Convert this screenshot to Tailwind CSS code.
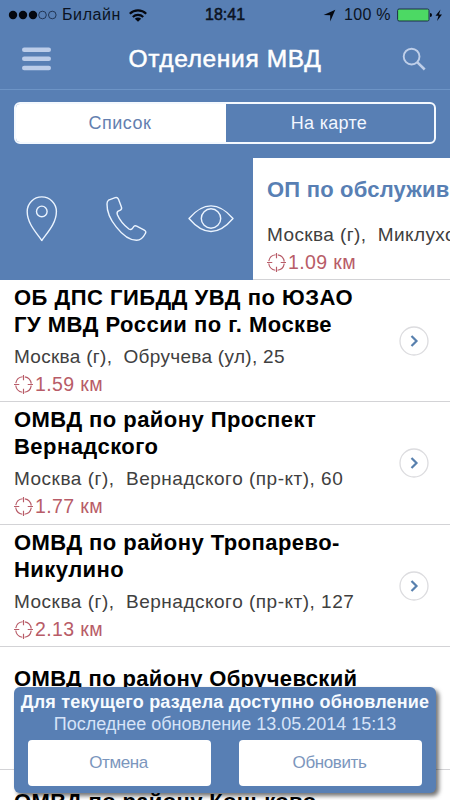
<!DOCTYPE html>
<html lang="ru">
<head>
<meta charset="utf-8">
<title>Отделения МВД</title>
<script src="https://cdn.jsdelivr.net/npm/@tailwindcss/browser@4"></script>
</head>
<body class="w-[450px] h-[800px] overflow-hidden bg-white font-['Liberation_Sans',Arial,sans-serif] relative">
<svg class="hidden">
  <symbol id="target" viewBox="0 0 18 18"><g fill="none" stroke="#b85c68" stroke-width="1.1"><circle cx="9" cy="9" r="7.4" stroke-dasharray="9.4 2.22" stroke-dashoffset="-1.11"/><path d="M9 0v5M9 13v5M0 9h5M13 9h5"/></g></symbol>
  <symbol id="go" viewBox="0 0 30 30"><circle cx="15" cy="15" r="14" fill="#fff" stroke="#dcdcdf" stroke-width="1.3"/><path d="M12.5 10l5 5-5 5" fill="none" stroke="#5880ae" stroke-width="2.2"/></symbol>
</svg>

<header class="h-[90px] bg-[#587fb4] border-b border-[#6d94c6]">
  <div class="flex h-[30px] items-center text-[16px] text-[#0b1322] leading-[30px]">
    <svg class="ml-[8px] w-[49px] h-[10px] shrink-0" viewBox="0 0 49 10"><g fill="#05080f"><circle cx="5" cy="5" r="4.2"/><circle cx="15" cy="5" r="4.2"/><circle cx="25" cy="5" r="4.2"/></g><g fill="none" stroke="#1c2e4b" stroke-width=".9"><circle cx="34.5" cy="5" r="3.8"/><circle cx="44.3" cy="5" r="3.8"/></g></svg>
    <span class="ml-[5px] w-[67px] tracking-[0.6px] whitespace-nowrap">Билайн</span>
    <svg class="w-[18px] h-[13px] shrink-0" viewBox="0 0 18 13"><g fill="none" stroke="#05080f" stroke-width="2.1"><path d="M.8 4.8a11.6 11.6 0 0 1 16.4 0"/><path d="M3.8 8a7.4 7.4 0 0 1 10.4 0"/></g><path d="M9 12.8L5.8 9.7a4.6 4.6 0 0 1 6.4 0z" fill="#05080f"/></svg>
    <span class="ml-[58px] w-[118px] text-[16px] [-webkit-text-stroke:0.5px_#0b1322]">18:41</span>
    <svg class="w-[13px] h-[13px] shrink-0" viewBox="0 0 13 13"><path d="M12.3.8L7.2 12.4V6.2L.6 6z" fill="#05080f"/></svg>
    <span class="ml-[8px] w-[53px] whitespace-nowrap tracking-[0.3px]">100 %</span>
    <svg class="w-[47px] h-[16px] shrink-0" viewBox="0 0 47 16"><rect x=".6" y="2" width="31.4" height="12" rx="1.5" fill="#4cd964" stroke="#1c3148"/><path d="M33 6a2 2 0 0 1 0 4z" fill="#05080f"/><path d="M43.5 2.6L38.500 8.800h3l-1.500 5.200 5-6.600h-3z" fill="#05080f"/></svg>
  </div>
  <div class="flex h-[58px] items-center justify-between pl-[22px] pr-[24px]">
    <svg class="w-[30px] h-[24px]" viewBox="0 0 30 24"><g fill="#bccde9"><rect x="0" y="0.500" width="29" height="4.500" rx="2.200"/><rect x="0" y="9.500" width="29" height="4.500" rx="2.200"/><rect x="0" y="18.800" width="29" height="4.500" rx="2.200"/></g></svg>
    <h1 class="mr-[4px] text-[24.500px] text-white tracking-[0.650px] whitespace-nowrap [-webkit-text-stroke:0.5px_white]">Отделения МВД</h1>
    <svg class="w-[24px] h-[24px]" viewBox="0 0 24 24"><g fill="none" stroke="#bfcfe9" stroke-width="1.9"><circle cx="9.6" cy="9.6" r="7.9"/><path d="M15.2 15.2l7.5 7.3" stroke-width="2.5"/></g></svg>
  </div>
</header>

<section class="h-[68px] bg-[#587fb4] px-[14px] pt-[12px]">
  <div class="flex h-[42px] rounded-[6px] border-2 border-[#f4f9ff] overflow-hidden text-[18px] text-center leading-[38px]">
    <div class="w-[210px] bg-white text-[#647fb0] tracking-[0.500px] pr-[2px]">Список</div>
    <div class="flex-1 text-[#f2f7ff] tracking-[0.3px] pr-[2px]">На карте</div>
  </div>
</section>

<main class="text-[19px] text-[#404040]">
  <article class="flex h-[121.500px]">
    <div class="w-[253px] shrink-0 bg-[#587fb4] flex items-center">
      <svg class="w-[253px] h-[50px]" viewBox="0 0 253 50"><g fill="none" stroke="#ebf4ff" stroke-width="1.4" stroke-linejoin="round">
        <path d="M41.8 46.5C37.5 40 27.2 30 27.2 17.5a14.6 14.6 0 0 1 29.2 0C56.4 30 46 40 41.8 46.5z"/><circle cx="41.8" cy="17.4" r="5.3"/>
        <path d="M108.5 6.2l6.7-2.5q2.2-.7 3.2 1.4l3 8q.8 2-1 3.1l-2.2 1q-1.7 1-.8 3.5c2.5 6 7.2 10.9 11.5 14.3q2 1.2 3.2-.2l1.800-2.400q1.100-1.200 2.800-.300l7.600 4q2.400 1.300 1 3.400-3.400 6.800-8.700 6.800c-6.800 0-14.700-6-20.400-13.400C110.300 25.600 106.800 18 107 10q0-2.700 1.500-3.800z"/>
        <path d="M189 24.500c6-7 13-12.600 22-12.600s16 5.600 22 12.600c-6 7-13 13-22 13s-16-6-22-13z"/><circle cx="211" cy="24.500" r="9.700"/></g></svg>
    </div>
    <div class="w-[197px] pl-[14px] pt-[18px] border-b border-[#d3d3d6] overflow-hidden whitespace-nowrap">
      <h2 class="text-[22px] leading-[27px] font-bold text-[#587fb4] tracking-[0.2px]">ОП по обслужив</h2>
      <p class="mt-[20px] leading-[24px] whitespace-pre tracking-[0.400px]">Москва (г),  Миклухо</p>
      <p class="mt-[2px] flex items-center leading-[27px] text-[19.500px] text-[#b85c68] tracking-[0.4px]"><svg class="w-[19px] h-[19px] mr-[2px]"><use href="#target"/></svg>1.09 км</p>
    </div>
  </article>
  <article class="h-[122.600px] pt-[4px] pl-[14px] pr-[21px] flex items-center justify-between border-b border-[#d3d3d6] whitespace-nowrap">
    <div class="self-start">
      <h2 class="text-[22px] leading-[27px] font-bold text-black"><span class="tracking-[0.500px]">ОБ ДПС ГИБДД УВД по ЮЗАО</span><br><span class="tracking-[0.500px]">ГУ МВД России по г. Москве</span></h2>
      <p class="mt-[7px] leading-[24px] whitespace-pre tracking-[0.300px]">Москва (г),  Обручева (ул), 25</p>
      <p class="mt-[2px] flex items-center leading-[27px] text-[19.500px] text-[#b85c68] tracking-[0.4px]"><svg class="w-[19px] h-[19px] mr-[2px]"><use href="#target"/></svg>1.59 км</p>
    </div>
    <svg class="w-[30px] h-[30px] mb-[3px]"><use href="#go"/></svg>
  </article>
  <article class="h-[122.600px] pt-[4px] pl-[14px] pr-[21px] flex items-center justify-between border-b border-[#d3d3d6] whitespace-nowrap">
    <div class="self-start">
      <h2 class="text-[22px] leading-[27px] font-bold text-black tracking-[0.450px]">ОМВД по району Проспект<br>Вернадского</h2>
      <p class="mt-[7px] leading-[24px] whitespace-pre tracking-[0.500px]">Москва (г),  Вернадского (пр-кт), 60</p>
      <p class="mt-[2px] flex items-center leading-[27px] text-[19.500px] text-[#b85c68] tracking-[0.4px]"><svg class="w-[19px] h-[19px] mr-[2px]"><use href="#target"/></svg>1.77 км</p>
    </div>
    <svg class="w-[30px] h-[30px] mb-[3px]"><use href="#go"/></svg>
  </article>
  <article class="h-[122.600px] pt-[4px] pl-[14px] pr-[21px] flex items-center justify-between border-b border-[#d3d3d6] whitespace-nowrap">
    <div class="self-start">
      <h2 class="text-[22px] leading-[27px] font-bold text-black tracking-[0.450px]">ОМВД по району Тропарево-<br>Никулино</h2>
      <p class="mt-[7px] leading-[24px] whitespace-pre tracking-[0.500px]">Москва (г),  Вернадского (пр-кт), 127</p>
      <p class="mt-[2px] flex items-center leading-[27px] text-[19.500px] text-[#b85c68] tracking-[0.4px]"><svg class="w-[19px] h-[19px] mr-[2px]"><use href="#target"/></svg>2.13 км</p>
    </div>
    <svg class="w-[30px] h-[30px] mb-[3px]"><use href="#go"/></svg>
  </article>
  <article class="h-[122.600px] pt-[18px] pl-[14px] border-b border-[#d3d3d6]">
    <h2 class="text-[22px] leading-[27px] font-bold text-black tracking-[0.350px]">ОМВД по району Обручевский</h2>
  </article>
  <article class="pt-[18px] pl-[14px]">
    <h2 class="text-[22px] leading-[27px] font-bold text-black tracking-[0.350px]">ОМВД по району Коньково</h2>
  </article>
</main>

<aside class="absolute left-[14px] top-[687px] w-[422px] h-[106px] rounded-[6px] bg-[#587fb4] shadow-[3px_3px_4px_rgba(0,0,0,0.55)] px-[14px] pt-[4px] text-center whitespace-nowrap">
  <p class="-mx-[14px] text-[18px] leading-[22px] font-bold text-[#f7fbff] tracking-[0.180px]">Для текущего раздела доступно обновление</p>
  <p class="text-[18px] leading-[22px] text-[#d5e3f8]">Последнее обновление 13.05.2014 15:13</p>
  <div class="mt-[5px] flex gap-[28px] text-[17px] leading-[45px] text-[#7b96bd] tracking-[-0.400px]">
    <div class="flex-1 h-[46px] rounded-[4px] bg-white pr-[2px]">Отмена</div>
    <div class="flex-1 h-[46px] rounded-[4px] bg-white pr-[2px]">Обновить</div>
  </div>
</aside>
</body>
</html>
